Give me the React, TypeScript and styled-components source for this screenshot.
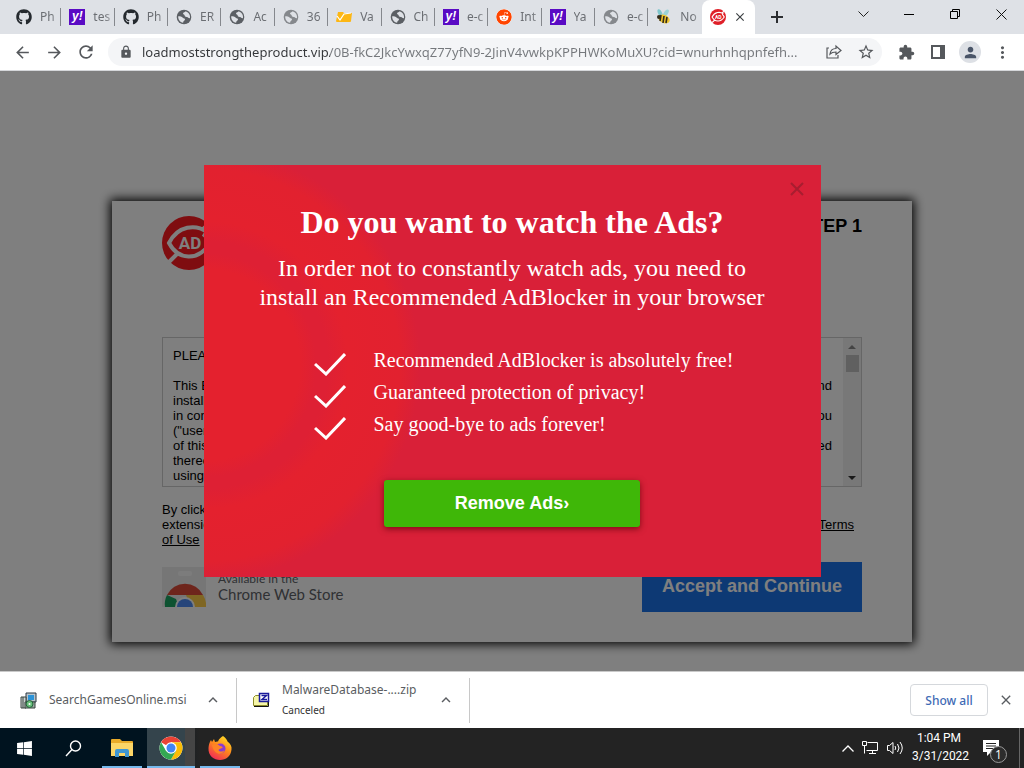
import React from "react";
import styled, { createGlobalStyle } from "styled-components";
import { FaGithub, FaReddit, FaWindows } from "react-icons/fa";
import {
  MdArrowBack,
  MdArrowForward,
  MdClose,
  MdExtension,
  MdKeyboardArrowUp,
  MdLock,
  MdMoreVert,
  MdPerson,
  MdRefresh,
  MdStarBorder,
} from "react-icons/md";

const uiFont = `"Noto Sans", "Open Sans", sans-serif`;
const arial = `"Liberation Sans", Arial, sans-serif`;
const times = `"Liberation Serif", "Times New Roman", serif`;

const GlobalStyle = createGlobalStyle`
  *, *::before, *::after { box-sizing: border-box; }
  body { margin: 0; font-family: ${uiFont}; }
  h1, h2, p, ul { margin: 0; padding: 0; }
  ul { list-style: none; }
  button { border: 0; padding: 0; background: none; font: inherit; color: inherit; cursor: pointer; }
  svg { display: block; flex: none; }
`;

const Screen = styled.div`
  display: flex;
  flex-direction: column;
  min-height: 100vh;
`;

/* ---------- Tab strip ---------- */

const TabStrip = styled.header`
  display: flex;
  align-items: stretch;
  height: 34px;
  padding-left: 8px;
  background: #dee1e6;
`;

const TabList = styled.div`
  display: flex;
  flex: 0 1 747px;
  min-width: 0;
`;

const Tab = styled.button<{ $active?: boolean }>`
  display: flex;
  flex: 1 1 0;
  min-width: 0;
  align-items: center;
  gap: ${(p) => (p.$active ? "7px" : "8px")};
  padding: 0 0 0 8px;
  color: ${(p) => (p.$active ? "#3c4043" : "#6b6e73")};
  background: ${(p) => (p.$active ? "#fff" : "transparent")};
  border-radius: ${(p) => (p.$active ? "8px 8px 0 0" : "0")};
`;

const TabTitle = styled.span`
  flex: 1;
  min-width: 0;
  white-space: nowrap;
  text-align: left;
  font-size: 12px;
  line-height: 18px;
  mask-image: linear-gradient(to right, #000 55%, rgba(0, 0, 0, 0.2));
`;

const TabDivider = styled.span`
  width: 1px;
  height: 18px;
  margin-left: -8px;
  background: #85888d;
`;

const YahooMark = styled.span`
  flex: none;
  width: 16px;
  height: 16px;
  background: #5a0bc4;
  color: #fff;
  font: italic 900 12px/14px ${arial};
  text-align: center;
`;

const NewTab = styled.button`
  display: grid;
  place-items: center;
  width: 44px;
  color: #2c2e31;
`;

const WindowControls = styled.div`
  display: flex;
  margin-left: auto;
  height: 28px;
`;

const WindowButton = styled.button`
  display: grid;
  place-items: center;
  width: 46px;
`;

/* ---------- Toolbar ---------- */

const Toolbar = styled.nav`
  display: flex;
  align-items: center;
  height: 37px;
  padding: 0 6px;
  background: #fff;
  border-bottom: 1px solid #d5d7da;
`;

const ToolButton = styled.button`
  display: grid;
  place-items: center;
  width: 32px;
  height: 28px;
  color: #55585c;
`;

const AddressBar = styled.div`
  display: flex;
  flex: 1;
  min-width: 0;
  align-items: center;
  height: 28px;
  margin: 0 8px 0 6px;
  padding-left: 11px;
  color: #55585c;
  background: #f4f5f7;
  border-radius: 14px;
`;

const AddressInput = styled.input`
  flex: 1;
  min-width: 0;
  height: 24px;
  margin-left: 9px;
  padding: 0;
  border: 0;
  outline: 0;
  color: #6d7074;
  background: linear-gradient(to right, #35373a 188px, #75787c 188px);
  background-clip: text;
  -webkit-text-fill-color: transparent;
  font: 13px/24px ${uiFont};
`;

const Avatar = styled.span`
  display: grid;
  place-items: center;
  width: 22px;
  height: 22px;
  border-radius: 50%;
  background: #dde0e5;
  color: #4a5568;
`;

/* ---------- Page ---------- */

const Page = styled.main`
  position: relative;
  display: flex;
  flex: 1;
  flex-direction: column;
  align-items: center;
  padding: 130px 16px 28px;
  background: #fff;
  font-family: ${arial};
`;

const Card = styled.section`
  width: 100%;
  max-width: 800px;
  min-height: 441px;
  padding: 15px 50px 30px;
  background: #fff;
  box-shadow: 0 0 10px 2px #000;
`;

const CardHeader = styled.div`
  display: flex;
  justify-content: space-between;
  align-items: flex-start;
  margin-bottom: 67px;
`;

const StepLabel = styled.h2`
  font-size: 18px;
  line-height: 20px;
`;

const License = styled.div`
  display: flex;
  height: 150px;
  border: 1px solid #ccc;
  overflow: hidden;
`;

const LicenseText = styled.div`
  flex: 1;
  padding: 10px 11px 0 10px;
  font-size: 13px;
  line-height: 15px;
`;

const Line = styled.p`
  display: flex;
  justify-content: space-between;
  min-height: 15px;
`;

const ScrollTrack = styled.div`
  display: flex;
  flex-direction: column;
  align-items: center;
  width: 18px;
  background: #f1f1f1;
`;

const ScrollArrow = styled.span<{ $down?: boolean }>`
  display: grid;
  place-items: center;
  height: 17px;
  margin-top: ${(p) => (p.$down ? "auto" : "0")};
  color: ${(p) => (p.$down ? "#333" : "#888")};
`;

const ScrollThumb = styled.span`
  width: 13px;
  height: 17px;
  background: #c1c1c1;
`;

const Consent = styled.div`
  padding: 15px 8px 0 0;
  font-size: 13px;
  line-height: 15px;

  a { color: #000; }
`;

const CardFooter = styled.div`
  display: flex;
  justify-content: space-between;
  align-items: flex-start;
  margin-top: 15px;
`;

const StoreBadge = styled.a`
  display: flex;
  align-items: flex-end;
  gap: 12px;
  height: 45px;
  color: #5f6368;
  text-decoration: none;
  font-family: Lato, sans-serif;
`;

const StoreText = styled.span`
  display: flex;
  flex-direction: column;
  font-size: 15px;
  line-height: 16px;
  padding-bottom: 5px;

  small {
    font-size: 12px;
    line-height: 15px;
  }
`;

const AcceptButton = styled.button`
  width: 220px;
  height: 50px;
  padding-bottom: 2px;
  background: #1a73e8;
  color: #fff;
  font-size: 18px;
  font-weight: bold;
`;

const Overlay = styled.div`
  position: absolute;
  inset: 0;
  display: flex;
  align-items: center;
  justify-content: center;
  background: rgba(0, 0, 0, 0.5);
`;

const Dialog = styled.section`
  position: relative;
  width: 617px;
  max-width: 100%;
  min-height: 412px;
  padding: 40px 50px 50px;
  color: #fff;
  text-align: center;
  font-family: ${times};
  background: radial-gradient(
    circle at 0 200px,
    #e4212e 96px,
    #de2034 112px,
    #de2034 124px,
    #e4212e 144px,
    #e2212f 196px,
    #d92038 216px
  );
`;

const DialogClose = styled.button`
  position: absolute;
  top: 15px;
  right: 15px;
  color: #a81d30;
`;

const DialogTitle = styled.h1`
  font-size: 32px;
  line-height: 34px;
`;

const DialogLead = styled.p`
  margin-top: 15px;
  font-size: 24px;
  line-height: 29px;
`;

const Benefits = styled.ul`
  margin: 32px 0 0 60px;
  text-align: left;
  font-size: 20px;
  line-height: 32px;
`;

const Benefit = styled.li`
  display: flex;
  align-items: center;
  gap: 28px;
  height: 32px;

  svg { margin-top: 9px; }
`;

const RemoveButton = styled.button`
  width: 256px;
  height: 47px;
  margin-top: 40px;
  padding-bottom: 2px;
  border-radius: 3px;
  background: #3fb708;
  box-shadow: 0 2px 6px rgba(90, 0, 10, 0.7);
  font: bold 18px/20px ${arial};
`;

/* ---------- Downloads ---------- */

const Downloads = styled.aside`
  display: flex;
  align-items: center;
  height: 57px;
  padding-right: 10px;
  background: #fff;
  border-top: 1px solid #c9c9c9;
  color: #5a5d61;
`;

const DownloadItem = styled.div<{ $width: number }>`
  display: flex;
  align-items: center;
  width: ${(p) => p.$width}px;
  height: 45px;
  padding: 0 14px 0 16px;
  border-right: 1px solid #c8c8c8;

  &:first-child { padding-left: 20px; }
`;

const FileInfo = styled.div`
  flex: 1;
  margin-left: 12px;
  font-size: 12px;
  line-height: 20px;

  small {
    display: block;
    font-size: 10px;
    color: #333;
  }
`;

const ShowAll = styled.button`
  width: 78px;
  height: 32px;
  margin: 0 10px 0 auto;
  border: 1px solid #d5d8dc;
  border-radius: 4px;
  color: #3f6bb5;
  font-size: 12px;
  font-weight: 500;
`;

/* ---------- Taskbar ---------- */

const Taskbar = styled.footer`
  display: flex;
  height: 40px;
  background: linear-gradient(to right, #00131f 148px, #232323 200px);
  color: #fff;
`;

const TaskButton = styled.button<{ $open?: boolean; $active?: boolean }>`
  display: grid;
  place-items: center;
  width: 48px;
  margin-right: 1px;
  background:
    linear-gradient(#76b9ed, #76b9ed) bottom / ${(p) => (p.$active ? "100%" : p.$open ? "40px" : "0")} 2px no-repeat,
    ${(p) => (p.$active ? "linear-gradient(to right, #34444c 38px, #454545 38px)" : "none")};
`;

const Tray = styled.div`
  display: flex;
  align-items: center;
  margin-left: auto;
`;

const TrayIcons = styled.div`
  display: flex;
  align-items: center;
  gap: 8px;
  margin-right: 8px;
`;

const Clock = styled.time`
  width: 54px;
  padding-bottom: 2px;
  font-size: 12px;
  line-height: 18px;
  text-align: center;
  white-space: nowrap;
  font-family: Roboto, sans-serif;
`;

const NoticeButton = styled.button`
  position: relative;
  width: 32px;
  height: 40px;
  margin: 0 4px 0 17px;
`;

const NoticeCount = styled.span`
  position: absolute;
  left: 7px;
  top: 18px;
  width: 17px;
  height: 17px;
  border: 1px solid #999;
  border-radius: 50%;
  background: #2c2c2c;
  font: 12px/15px "Open Sans", sans-serif;
`;

const DesktopEdge = styled.span`
  width: 5px;
  height: 40px;
  border-left: 1px solid #666;
`;

/* ---------- Drawings ---------- */

const Globe = ({ light }: { light?: boolean }) => (
  <svg width="16" height="16" viewBox="0 0 16 16">
    <circle cx="8" cy="8" r="7.300" fill={light ? "#85888c" : "#5b5f64"} />
    <path
      d="M9.500 2.300c-.2 1.200-2.500.9-2.500 2.200 0 1 1.500.8 1.600 1.800.1 1.200 1 1.700 2.400 1.600 1.200 0 1.200 1.400 3 1.300.5-3.300-1.500-6-4.500-6.900zM2.200 7.300c1.800 0 3.700.4 4.600 1.500.9.900 2.300.5 2.200 1.700-.1 1.100-1.800.9-1.900 3.300-3-.4-5.100-3.200-4.900-6.500z"
      fill="#dee1e6"
    />
  </svg>
);

const AdLogo = ({ size, bright }: { size: number; bright?: boolean }) => (
  <svg width={size} height={size} viewBox="0 0 54 54">
    <circle cx="27" cy="27" r="27" fill={bright ? "#df2029" : "#ff1a20"} />
    <path
      d="M40 14 50 5M15 38 7 46M45 16C34 8 16 9 7 27c9 17 29 19 41 0-2-4-4-7-7-9"
      fill="none"
      stroke="#fff"
      strokeWidth="4"
    />
    <text x="28" y="33" fill="#fff" fontFamily="Roboto, sans-serif" fontSize="17" fontWeight="bold" textAnchor="middle">
      AD
    </text>
  </svg>
);

const FolderTabIcon = () => (
  <svg width="16" height="16" viewBox="0 0 16 16">
    <path d="M2 3h5l1 1h8l-1 8q0 1-1 1H1q-1 0-1-1z" fill="#fdb714" />
    <path d="M1 7l3 4 4-6 7-1" fill="none" stroke="#fff" strokeWidth="1.2" />
  </svg>
);

const BeeIcon = () => (
  <svg width="16" height="16" viewBox="0 0 16 16">
    <ellipse cx="4" cy="4" rx="2" ry="4" fill="#7ec6cc" transform="rotate(-25 4 4)" />
    <ellipse cx="10" cy="4" rx="2" ry="4" fill="#9bd4d8" transform="rotate(35 10 4)" />
    <ellipse cx="8" cy="10" rx="6" ry="4" fill="#eec52e" transform="rotate(25 8 10)" />
    <path d="M5 6l-1 6M8 7l-1 7M11 8l-1 6" stroke="#332b1b" strokeWidth="1.6" />
    <circle cx="3" cy="8" r="2" fill="#332b1b" />
  </svg>
);

const ChromeIcon = ({ size }: { size: number }) => (
  <svg width={size} height={size} viewBox="0 0 48 48">
    <circle cx="24" cy="24" r="23" fill="#fff" />
    <path d="M24 24 4.1 12.5A23 23 0 0 1 43.9 12.5H24z" fill="#ea4335" />
    <path d="M43.9 12.5A23 23 0 0 1 24 47l10-17.3L34 18l-10-5.5z" fill="#fbbc05" />
    <path d="M4.1 12.5A23 23 0 0 0 24 47l10-17.3H14z" fill="#34a853" />
    <circle cx="24" cy="24" r="11.5" fill="#fff" />
    <circle cx="24" cy="24" r="9" fill="#4285f4" />
  </svg>
);

const StoreChromeIcon = () => (
  <svg width="44" height="40" viewBox="0 0 44 40">
    <path d="M0 0h44v40H0z" fill="#ececec" />
    <rect x="16" y="4" width="14" height="5" rx="2" fill="#f8f8f8" />
    <path d="M5 28a20 20 0 0 1 36 0H23z" fill="#dd4b39" />
    <path d="M5 28a20 20 0 0 0-2 12h14l-3-8z" fill="#1da462" />
    <path d="M24 28h17a20 20 0 0 1 3 8v4H29z" fill="#ffcd46" />
    <path d="M13 40a10 10 0 0 1 20 0z" fill="#fff" />
    <path d="M15 40a8 8 0 0 1 16 0z" fill="#4c8bf5" />
  </svg>
);

const FirefoxIcon = () => (
  <svg width="24" height="24" viewBox="0 0 24 24">
    <defs>
      <linearGradient id="fox" x1="0.8" y1="0" x2="0.2" y2="1">
        <stop offset="0" stopColor="#ffe226" />
        <stop offset="0.45" stopColor="#ff8a1c" />
        <stop offset="1" stopColor="#f0245a" />
      </linearGradient>
    </defs>
    <path
      d="M15 0c3 2 4 4 4.500 5.500 3 2 4.500 5 4 8C23 20 18 24 12 24S0 20 .5 12C.7 9 1.500 6 3 4l1 2 2-3 1 3c1-.5 2-.7 3-.5 1-3 3-4 5-5.500z"
      fill="url(#fox)"
    />
    <circle cx="12.500" cy="12.500" r="5" fill="#8a3bd0" />
    <path d="M4 9c3-2 6-1 8 1 2 0 3 1 2.500 2-1.500.5-3 .5-4 2 1 2 4 2 6 0-1 4-6 5-9 2C5.500 14 4.500 12 4 9z" fill="#ff8326" />
  </svg>
);

const ExplorerIcon = () => (
  <svg width="22" height="20" viewBox="0 0 22 20">
    <path d="M0 2q0-1 1-1h8l2 2h10q1 0 1 1v14H0z" fill="#e9ab29" />
    <path d="M0 5h22v13H0z" fill="#fcd667" />
    <path d="M4 19v-6q0-2 2-2h10q2 0 2 2v6h-4v-4H8v4z" fill="#3f97d3" />
  </svg>
);

const MsiIcon = () => (
  <svg width="17" height="17" viewBox="0 0 17 17">
    <path d="M6 1h10v9H6z" fill="#b8c4cc" stroke="#2b3740" />
    <path d="M8 3h6v5H8z" fill="#2b93d8" />
    <path d="M1 5h5v11H1z" fill="#ccd2d2" stroke="#39443f" />
    <path d="M3 5v11M5 10h10v6H5z" fill="#9ba8a1" stroke="#39443f" />
    <circle cx="9.500" cy="12" r="3.500" fill="#67bf7a" stroke="#25603a" />
    <circle cx="9.500" cy="12" r="1" fill="#fff" />
  </svg>
);

const ZipIcon = () => (
  <svg width="17" height="16" viewBox="0 0 17 16">
    <path d="M.5 5.500l2-2h12v10H.5z" fill="#f6f6a8" stroke="#8d8d2a" />
    <path d="M1 14.500h14.500V8" fill="none" stroke="#111" />
    <path d="M6.500 1.500h9v8h-9z" fill="#fff" stroke="#1a1a9a" strokeWidth="1.500" />
    <path d="M8.500 3.500h5l-4.500 4h5" fill="none" stroke="#1a1a9a" strokeWidth="1.500" />
  </svg>
);

const Check = () => (
  <svg width="32" height="23" viewBox="0 0 32 23">
    <path d="M1 11l11 10L31 1" fill="none" stroke="#fff" strokeWidth="3" />
  </svg>
);

/* ---------- Data ---------- */

const yahoo = <YahooMark>y!</YahooMark>;
const github = <FaGithub size={16} color="#24292e" />;

const tabs: { icon: React.ReactNode; title: string }[] = [
  { icon: github, title: "Ph" },
  { icon: yahoo, title: "tes" },
  { icon: github, title: "Ph" },
  { icon: <Globe />, title: "ER" },
  { icon: <Globe />, title: "Ac" },
  { icon: <Globe light />, title: "36" },
  { icon: <FolderTabIcon />, title: "Va" },
  { icon: <Globe />, title: "Ch" },
  { icon: yahoo, title: "e-c" },
  { icon: <FaReddit size={16} color="#ff4500" style={{ background: "#fff", borderRadius: "50%" }} />, title: "Int" },
  { icon: yahoo, title: "Ya" },
  { icon: <Globe light />, title: "e-c" },
  { icon: <BeeIcon />, title: "No" },
];

const licenseLines: [string, string][] = [
  ["PLEASE", ""],
  ["", ""],
  ["This End", "and"],
  ["install", ""],
  ["in conn", "you"],
  ['("user")', ""],
  ["of this", "ed"],
  ["thereof", ""],
  ["using", ""],
  ["do", ""],
];

const benefits = [
  "Recommended AdBlocker is absolutely free!",
  "Guaranteed protection of privacy!",
  "Say good-bye to ads forever!",
];

export default function App() {
  return (
    <Screen>
      <GlobalStyle />
      <TabStrip>
        <TabList role="tablist">
          {tabs.map((tab, i) => (
            <Tab key={i} role="tab" aria-selected={false}>
              {tab.icon}
              <TabTitle>{tab.title}</TabTitle>
              {i < tabs.length - 1 && <TabDivider />}
            </Tab>
          ))}
          <Tab $active role="tab" aria-selected aria-label="Current tab">
            <AdLogo size={16} bright />
            <MdClose size={14} />
          </Tab>
        </TabList>
        <NewTab aria-label="New tab">
          <svg width="12" height="12" viewBox="0 0 12 12" stroke="currentColor" strokeWidth="2">
            <path d="M6 0v12M0 6h12" />
          </svg>
        </NewTab>
        <WindowControls>
          <WindowButton aria-label="Search tabs">
            <svg width="11" height="7" viewBox="0 0 11 7" fill="none" stroke="#222">
              <path d="M.5.5l5 5 5-5" />
            </svg>
          </WindowButton>
          <WindowButton aria-label="Minimize">
            <svg width="10" height="1" viewBox="0 0 10 1">
              <path d="M0 0h10v1H0z" />
            </svg>
          </WindowButton>
          <WindowButton aria-label="Restore">
            <svg width="10" height="10" viewBox="0 0 10 10" fill="none" stroke="#000">
              <path d="M.5 2.500h7v7h-7zM2.500 2.500v-2h7v7h-2" />
            </svg>
          </WindowButton>
          <WindowButton aria-label="Close">
            <svg width="11" height="11" viewBox="0 0 11 11" stroke="#111">
              <path d="M.5.5l10 10M10.500.5l-10 10" />
            </svg>
          </WindowButton>
        </WindowControls>
      </TabStrip>

      <Toolbar>
        <ToolButton aria-label="Back"><MdArrowBack size={19} /></ToolButton>
        <ToolButton aria-label="Forward"><MdArrowForward size={19} /></ToolButton>
        <ToolButton aria-label="Reload"><MdRefresh size={20} /></ToolButton>
        <AddressBar>
          <MdLock size={14} />
          <AddressInput
            aria-label="Address"
            readOnly
            value="loadmoststrongtheproduct.vip/0B-fkC2JkcYwxqZ77yfN9-2JinV4vwkpKPPHWKoMuXU?cid=wnurhnhqpnfefh..."
          />
          <ToolButton aria-label="Share">
            <svg width="16" height="16" viewBox="0 0 16 16" fill="none" stroke="currentColor" strokeWidth="1.2">
              <path d="M3 4H1v10h11v-3M4 10c.5-4 3-5.500 6-5.500V2l5 4.500-5 4V8c-3 0-4.500.5-6 2z" />
            </svg>
          </ToolButton>
          <ToolButton aria-label="Bookmark"><MdStarBorder size={18} /></ToolButton>
        </AddressBar>
        <ToolButton aria-label="Extensions"><MdExtension size={17} /></ToolButton>
        <ToolButton aria-label="Side panel">
          <svg width="14" height="14" viewBox="0 0 14 14" fill="currentColor">
            <path fillRule="evenodd" d="M0 0h14v14H0zM2 2v10h7V2z" />
          </svg>
        </ToolButton>
        <ToolButton aria-label="Profile"><Avatar><MdPerson size={17} /></Avatar></ToolButton>
        <ToolButton aria-label="Menu"><MdMoreVert size={19} /></ToolButton>
      </Toolbar>

      <Page>
        <Card>
          <CardHeader>
            <AdLogo size={54} />
            <StepLabel>STEP 1</StepLabel>
          </CardHeader>
          <License>
            <LicenseText>
              {licenseLines.map(([start, end], i) => (
                <Line key={i}>
                  <span>{start}</span>
                  <span>{end}</span>
                </Line>
              ))}
            </LicenseText>
            <ScrollTrack>
              <ScrollArrow>
                <svg width="8" height="4" viewBox="0 0 8 4" fill="currentColor"><path d="M0 4l4-4 4 4z" /></svg>
              </ScrollArrow>
              <ScrollThumb />
              <ScrollArrow $down>
                <svg width="8" height="4" viewBox="0 0 8 4" fill="currentColor"><path d="M0 0l4 4 4-4z" /></svg>
              </ScrollArrow>
            </ScrollTrack>
          </License>
          <Consent>
            <Line><span>By clicking</span></Line>
            <Line>
              <span>extension</span>
              <a href="#terms">Terms</a>
            </Line>
            <Line><a href="#terms">of Use</a></Line>
          </Consent>
          <CardFooter>
            <StoreBadge href="#store">
              <StoreChromeIcon />
              <StoreText>
                <small>Available in the</small>
                Chrome Web Store
              </StoreText>
            </StoreBadge>
            <AcceptButton>Accept and Continue</AcceptButton>
          </CardFooter>
        </Card>

        <Overlay>
          <Dialog role="dialog" aria-labelledby="ads-title">
            <DialogClose aria-label="Close dialog">
              <svg width="18" height="18" viewBox="0 0 18 18" stroke="currentColor" strokeWidth="2">
                <path d="M3 3l12 12M15 3L3 15" />
              </svg>
            </DialogClose>
            <DialogTitle id="ads-title">Do you want to watch the Ads?</DialogTitle>
            <DialogLead>
              In order not to constantly watch ads, you need to
              <br />
              install an Recommended AdBlocker in your browser
            </DialogLead>
            <Benefits>
              {benefits.map((text) => (
                <Benefit key={text}>
                  <Check />
                  {text}
                </Benefit>
              ))}
            </Benefits>
            <RemoveButton>Remove Ads›</RemoveButton>
          </Dialog>
        </Overlay>
      </Page>

      <Downloads>
        <DownloadItem $width={237}>
          <MsiIcon />
          <FileInfo>SearchGamesOnline.msi</FileInfo>
          <button aria-label="Options for SearchGamesOnline.msi"><MdKeyboardArrowUp size={18} /></button>
        </DownloadItem>
        <DownloadItem $width={233}>
          <ZipIcon />
          <FileInfo>
            MalwareDatabase-....zip
            <small>Canceled</small>
          </FileInfo>
          <button aria-label="Options for MalwareDatabase"><MdKeyboardArrowUp size={18} /></button>
        </DownloadItem>
        <ShowAll>Show all</ShowAll>
        <button aria-label="Close downloads"><MdClose size={16} /></button>
      </Downloads>

      <Taskbar>
        <TaskButton aria-label="Start"><FaWindows size={17} /></TaskButton>
        <TaskButton aria-label="Search">
          <svg width="17" height="17" viewBox="0 0 17 17" fill="none" stroke="#fff" strokeWidth="1.4">
            <circle cx="10.500" cy="6" r="5" />
            <path d="M7 9.500L1 16" />
          </svg>
        </TaskButton>
        <TaskButton $open aria-label="File Explorer"><ExplorerIcon /></TaskButton>
        <TaskButton $open $active aria-label="Chrome"><ChromeIcon size={24} /></TaskButton>
        <TaskButton $open aria-label="Firefox"><FirefoxIcon /></TaskButton>
        <Tray>
          <TrayIcons>
            <svg width="12" height="7" viewBox="0 0 12 7" fill="none" stroke="#fff" strokeWidth="1.3">
              <path d="M.5 6.500L6 1l5.500 5.500" />
            </svg>
            <svg width="17" height="14" viewBox="0 0 17 14" fill="none" stroke="#fff">
              <path d="M5.500 1.500h10v8h-11M10.500 9.500v3M7 12.500h7M.5.5h4v4h-4zM2.500 4.500v8" />
            </svg>
            <svg width="17" height="14" viewBox="0 0 17 14" fill="none" stroke="#fff">
              <path d="M.5 4.500h2l3.500-3v11l-3.500-3h-2zM8 5q1.500 2 0 4M10.500 3q3 4 0 8M13 1q4.500 6 0 12" />
            </svg>
          </TrayIcons>
          <Clock>
            1:04 PM
            <br />
            3/31/2022
          </Clock>
          <NoticeButton aria-label="Notifications">
            <svg width="16" height="16" viewBox="0 0 16 16">
              <path d="M0 0h16v12H8l-4 4v-4H0z" fill="#fff" />
              <path d="M3 3.500h10M3 6h10M3 8.500h7" stroke="#232323" />
            </svg>
            <NoticeCount>1</NoticeCount>
          </NoticeButton>
          <DesktopEdge />
        </Tray>
      </Taskbar>
    </Screen>
  );
}
